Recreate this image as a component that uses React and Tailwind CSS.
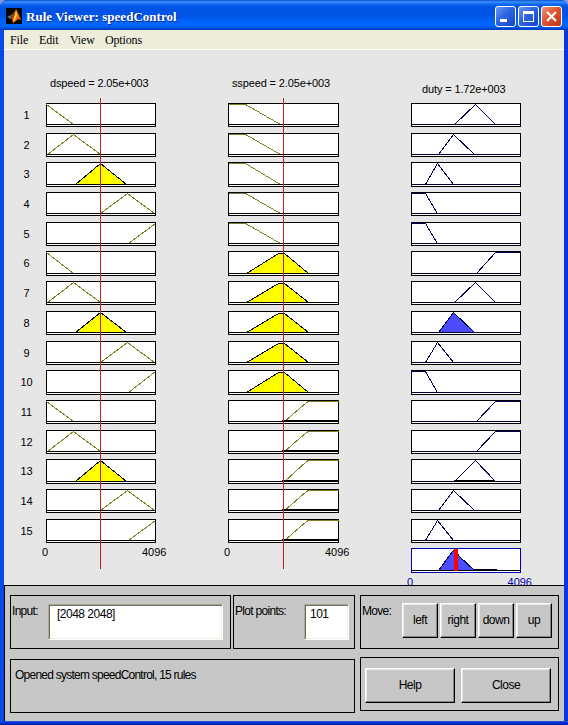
import React from "react";

const TITLE = "Rule Viewer: speedControl";
const MENU = [
  ["File", "w-[29px]"],
  ["Edit", "w-[31px]"],
  ["View", "w-[35px]"],
  ["Options", "w-[60px]"],
];

// Curves are drawn in box coordinates: y 1 is full membership, y 21 is zero.
const SPEED = [
  [[0, 1], [27, 21]],
  [[1, 21], [27, 1], [54, 21]],
  [[29, 21], [54, 1], [80, 21]],
  [[54, 21], [81, 1], [108, 21]],
  [[82, 21], [109, 1]],
];
const SLOW = [[0, 1], [17, 1], [52, 21]];
const MID = [[18, 21], [50, 2], [56, 2], [80, 21]];
const FAST = [[56, 21], [78, 2], [80, 1], [110, 1]];

const DUTY = {
  off: [[0, 1], [14, 1], [26, 21]],
  low: [[14, 21], [26, 1], [42, 21]],
  mid: [[27, 21], [42, 1], [63, 21]],
  high: [[43, 21], [64, 1], [84, 21]],
  full: [[65, 21], [84, 1], [109, 1]],
};
const DUTY_BY_RULE = [
  "high", "mid", "low", "off", "off",
  "full", "high", "mid", "low", "off",
  "full", "full", "high", "mid", "low",
];
// Distance between the tops of consecutive rows
const STEPS = [30, 29, 30, 30, 29, 30, 30, 30, 29, 30, 30, 29, 30, 30, 29];
// Rows whose boxes round up to one extra pixel of height
const TALL_ROWS = [2, 5, 9, 12];

function Plot({ width, tall, points, stroke, fill = "none", heavy, base = "#000", frame = "#000", children }) {
  const h = tall ? 25 : 24;
  const pts = points
    .map(([x, y]) => `${x + 0.5},${(y > 20 ? h - 3 : y) + 0.5}`)
    .join(" ");
  return (
    <svg width={width} height={h} shapeRendering="crispEdges" className="block shrink-0">
      <rect x="0.5" y="0.5" width={width - 1} height={h - 1} fill="#fff" stroke={frame} />
      <polyline points={pts} fill={fill} stroke={stroke} />
      <rect x="1" y={h - 3} width={width - 2} height="1" fill={base} />
      {heavy && <rect x={heavy[0]} y={h - 4} width={heavy[1] - heavy[0]} height="2" fill="#000" />}
      {children}
    </svg>
  );
}

function RuleRow({ i }) {
  const tall = TALL_ROWS.includes(i);
  const fires = i % 5 === 2;
  const band = Math.floor(i / 5);
  const second = [SLOW, MID, FAST][band];
  return (
    <div className={`flex shrink-0 ${STEPS[i] === 29 ? "h-[29px]" : "h-[30px]"}`}>
      <div className="w-[42px] pl-[3px] pt-[5px] text-center text-[11px] leading-[14px]">{i + 1}</div>
      <Plot width={110} tall={tall} points={SPEED[i % 5]} stroke={fires ? "#000" : "#808020"} fill={fires ? "#ffff00" : "none"} />
      <div className="w-[72px]" />
      <Plot
        width={111}
        tall={tall}
        points={second}
        stroke={band === 1 ? "#000" : "#808020"}
        fill={band === 1 ? "#ffff00" : "none"}
        heavy={band === 2 ? [54, 110] : null}
      />
      <div className="w-[72px]" />
      <Plot
        width={110}
        tall={tall}
        points={DUTY[DUTY_BY_RULE[i]]}
        stroke="#000050"
        base="#000030"
        fill={i === 7 ? "#4b4bff" : "none"}
        heavy={i === 12 ? [43, 84] : null}
      />
    </div>
  );
}

function Button({ children, size }) {
  return (
    <button className={`${size} shrink-0 border border-b-black border-r-black border-l-white border-t-white bg-[#c7c7c7] shadow-[inset_-1px_-1px_0_#858585,inset_1px_1px_0_#e8e8e8] pb-px text-center text-[12px] leading-[14px] tracking-[-0.5px]`}>
      {children}
    </button>
  );
}

function Field({ children, size }) {
  return (
    <div className={`${size} h-[36px] shrink-0 border border-b-white border-r-white border-l-[#aaa797] border-t-[#aaa797] bg-white shadow-[inset_1px_1px_0_#6f6b5e,inset_-1px_-1px_0_#f1efe2] pt-[2px] text-[12px] leading-[14px] tracking-[-0.5px]`}>
      {children}
    </div>
  );
}

function MatlabIcon() {
  return (
    <svg width="16" height="16" viewBox="0 0 16 16" className="block">
      <rect width="16" height="16" fill="#050505" />
      <path d="M1 9 L5 7 L7 9 L5 11 Z" fill="#557f91" />
      <path d="M5 7 L8 4 L10 1 L8 8 L6 11 L4 10 Z" fill="#9a372b" />
      <path d="M10 1 L12 5 L15 12 L12 11 L10 13 L7 15 L6 11 L9 7 Z" fill="#ee6b16" />
      <path d="M10 2 L11 7 L9 12 L7 14 L8 9 Z" fill="#ffd52c" />
    </svg>
  );
}

function WindowButton({ kind }) {
  return (
    <svg width="21" height="21" viewBox="0 0 21 21" className="block">
      <defs>
        <linearGradient id={"g-" + kind} x1="0" y1="0" x2="1" y2="1">
          <stop offset="0" stopColor={kind === "close" ? "#ee9b83" : "#6c9af5"} />
          <stop offset="0.45" stopColor={kind === "close" ? "#df5430" : "#2e64e0"} />
          <stop offset="1" stopColor={kind === "close" ? "#bd3510" : "#1244cb"} />
        </linearGradient>
      </defs>
      <rect x="0.5" y="0.5" width="20" height="20" rx="2.5" fill={`url(#g-${kind})`} stroke="#fff" />
      {kind === "min" && <rect x="5" y="13" width="7" height="3" fill="#fff" />}
      {kind === "max" && <path d="M5 5h11v11H5z M6 8v7h9V8z" fill="#fff" fillRule="evenodd" />}
      {kind === "close" && <path d="M6 6l9 9M15 6l-9 9" stroke="#fff" strokeWidth="2.2" />}
    </svg>
  );
}

export default function App() {
  return (
    <div className="h-[725px] w-[568px] bg-[#8a97e0] font-['Liberation_Sans',Arial,sans-serif] text-black">
      <div className="flex h-full flex-col overflow-hidden rounded-t-[7px] bg-[#0831d9]">
        <header className="flex h-[30px] shrink-0 items-start bg-[linear-gradient(#0a4ed0_0px,#3a93ff_2px,#1269f2_4px,#0054e3_7px,#0052e5_15px,#0065fb_22px,#0066ff_26px,#0052dc_28px,#0037b8_30px)] pl-[6px] pr-[6px]">
          <div className="pt-[8px]"><MatlabIcon /></div>
          <h1 className="w-[160px] whitespace-nowrap pl-[4px] pt-[9px] font-['Liberation_Serif',serif] text-[13px] font-bold leading-[16px] tracking-[0.03px] text-white [text-shadow:1px_1px_0_#0a2a90]">{TITLE}</h1>
          <div className="ml-auto flex gap-[2px] pt-[6px]">
            <WindowButton kind="min" />
            <WindowButton kind="max" />
            <WindowButton kind="close" />
          </div>
        </header>
        <div className="flex h-[691px] shrink-0 border-x-4 border-l-[#0a48e8] border-r-[#0838d8]">
          <div className="flex w-[560px] flex-col">
            <nav className="flex h-[20px] shrink-0 border-b border-white bg-[#eeeddb] pl-[6px] font-['Liberation_Serif',serif] text-[12px] leading-[20px] tracking-[-0.15px]">
              {MENU.map(([name, w]) => (
                <span key={name} className={w}>{name}</span>
              ))}
            </nav>
            <main className="relative flex h-[535px] shrink-0 flex-col overflow-hidden bg-[#e6e6e6]">
              <div className="flex h-[53px] shrink-0 whitespace-nowrap pl-[46px] text-[11px] leading-[14px] tracking-[-0.13px]">
                <div className="w-[182px] pt-[26px]">dspeed = 2.05e+003</div>
                <div className="w-[190px] pt-[26px]">sspeed = 2.05e+003</div>
                <div className="pt-[32px]">duty = 1.72e+003</div>
              </div>
              {STEPS.map((_, i) => (
                <RuleRow key={i} i={i} />
              ))}
              <div className="flex shrink-0 pl-[38px] text-[11px] leading-[14px]">
                <div className="-mt-[3px] w-[100px]">0</div>
                <div className="-mt-[3px] w-[82px]">4096</div>
                <div className="-mt-[3px] w-[101px]">0</div>
                <div className="-mt-[3px] w-[86px]">4096</div>
                <div>
                  <Plot
                    width={110}
                    tall
                    points={[[27, 21], [41, 3], [43, 1], [48, 8], [63, 21]]}
                    stroke="#000050"
                    fill="#4b4bff"
                    frame="#0000b0"
                  >
                    <rect x="63" y="21" width="23" height="2" fill="#000" />
                    <rect x="43" y="1" width="4" height="22" fill="#f00" />
                  </Plot>
                  <div className="-ml-[4px] mt-[2px] flex w-[125px] justify-between text-[#0000b0]">
                    <span>0</span>
                    <span>4096</span>
                  </div>
                </div>
              </div>
              <div className="absolute left-[96px] top-[48px] h-[471px] w-px bg-[#c81e1e]" />
              <div className="absolute left-[279px] top-[48px] h-[471px] w-px bg-[#c81e1e]" />
            </main>
            <footer className="flex h-[136px] shrink-0 gap-[5px] border-l border-t border-black bg-[#c7c7c7] pl-[5px] pt-[9px] text-[12px] leading-[14px] tracking-[-0.7px]">
              <div className="flex w-[345px] flex-col gap-[10px]">
                <div className="flex gap-[2px]">
                  <div className="flex h-[54px] w-[221px] border border-black pl-[1px] pt-[8px]">
                    <span className="w-[36px]">Input:</span>
                    <Field size="w-[175px] pl-[8px]">[2048 2048]</Field>
                  </div>
                  <div className="flex h-[54px] w-[122px] border border-black pl-[1px] pt-[8px]">
                    <span className="w-[69px] whitespace-nowrap">Plot points:</span>
                    <Field size="w-[45px] pl-[5px]">101</Field>
                  </div>
                </div>
                <div className="h-[54px] border border-black pl-[4px] pt-[8px] tracking-[-0.76px]">Opened system speedControl, 15 rules</div>
              </div>
              <div className="flex w-[199px] flex-col gap-[8px]">
                <div className="flex h-[54px] border border-black pl-[1px] pt-[7px]">
                  <span className="w-[40px] pt-px">Move:</span>
                  <div className="flex gap-[2px]">
                    <Button size="h-[35px] w-[36px]">left</Button>
                    <Button size="h-[35px] w-[36px]">right</Button>
                    <Button size="h-[35px] w-[36px]">down</Button>
                    <Button size="h-[35px] w-[36px]">up</Button>
                  </div>
                </div>
                <div className="flex h-[54px] gap-[6px] border border-black pl-[4px] pt-[10px]">
                  <Button size="h-[35px] w-[90px]">Help</Button>
                  <Button size="h-[35px] w-[90px]">Close</Button>
                </div>
              </div>
            </footer>
          </div>
        </div>
        <div className="h-[4px] bg-[linear-gradient(#2a5be0,#0831d9_40%,#001ea0)]" />
      </div>
    </div>
  );
}
